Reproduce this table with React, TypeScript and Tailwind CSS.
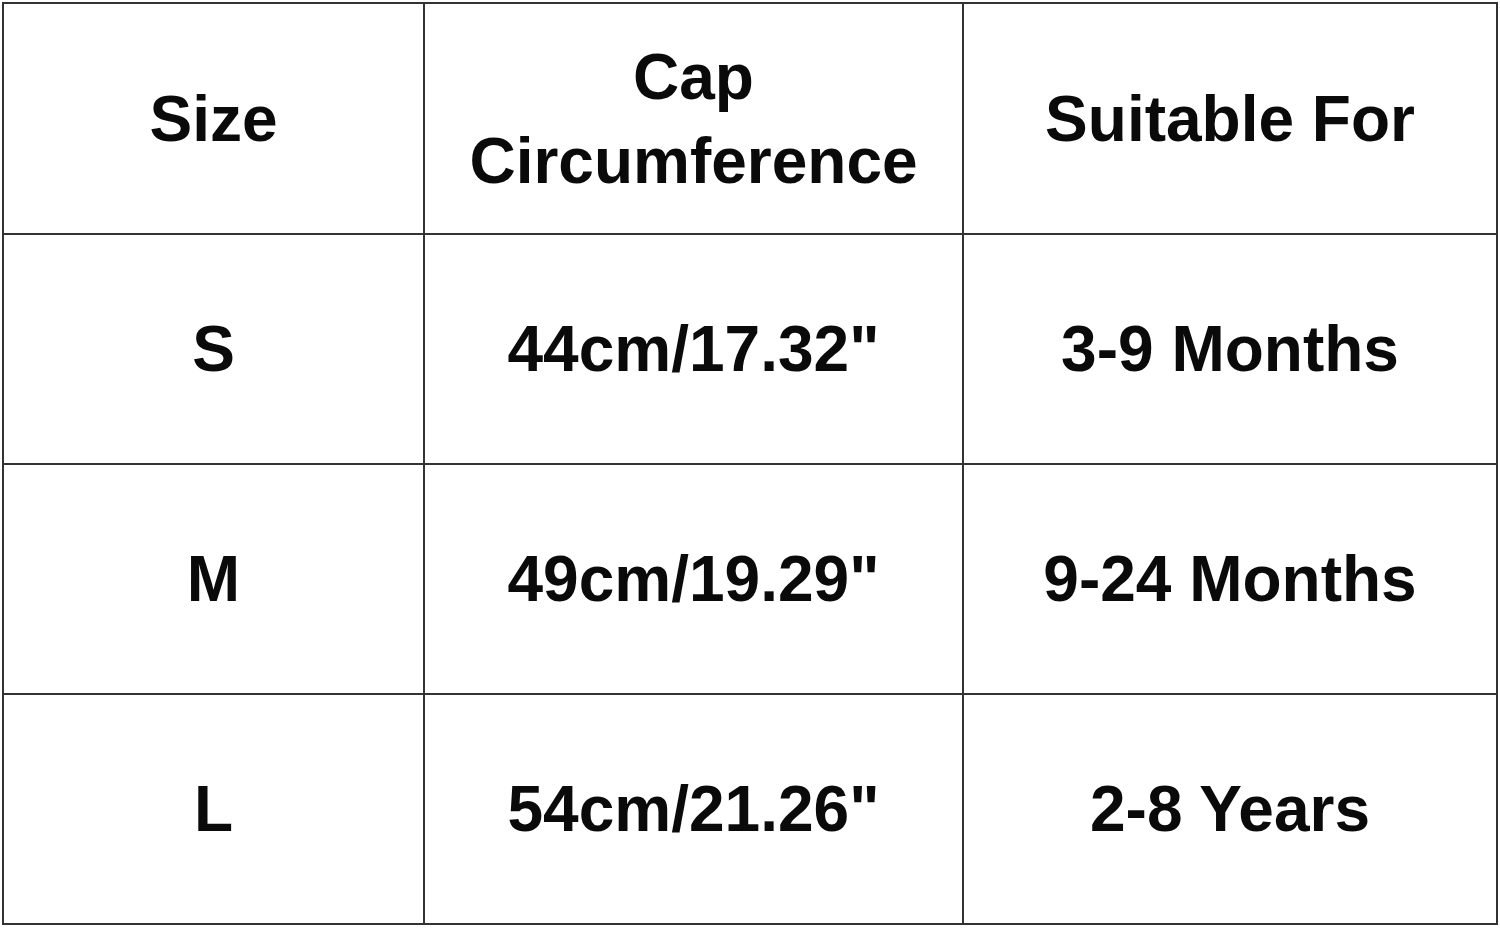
import React from 'react';

const rows = [
  { size: 'S', circ: '44cm/17.32"', fit: '3-9 Months' },
  { size: 'M', circ: '49cm/19.29"', fit: '9-24 Months' },
  { size: 'L', circ: '54cm/21.26"', fit: '2-8 Years' },
];

const cell = 'border-2 border-[#333] text-center align-middle p-0';

const App: React.FC = () => {
  return (
    <div className="w-[1500px] h-[928px] bg-white pt-[2px] pl-[2px]">
      <table
        className="border-collapse table-fixed w-[1494px] text-[#0a0a0a] font-bold text-[64px] leading-[84px]"
        style={{ fontFamily: '"Liberation Sans", Arial, sans-serif' }}
      >
        <colgroup>
          <col className="w-[421px]" />
          <col className="w-[539px]" />
          <col className="w-[534px]" />
        </colgroup>
        <tbody>
          <tr className="h-[231px]">
            <td className={cell}>Size</td>
            <td className={cell}>
              Cap
              <br />
              Circumference
            </td>
            <td className={cell}>Suitable For</td>
          </tr>
          {rows.map((r) => (
            <tr key={r.size} className="h-[230px]">
              <td className={cell}>{r.size}</td>
              <td className={cell}>{r.circ}</td>
              <td className={cell}>{r.fit}</td>
            </tr>
          ))}
        </tbody>
      </table>
    </div>
  );
};

export default App;
